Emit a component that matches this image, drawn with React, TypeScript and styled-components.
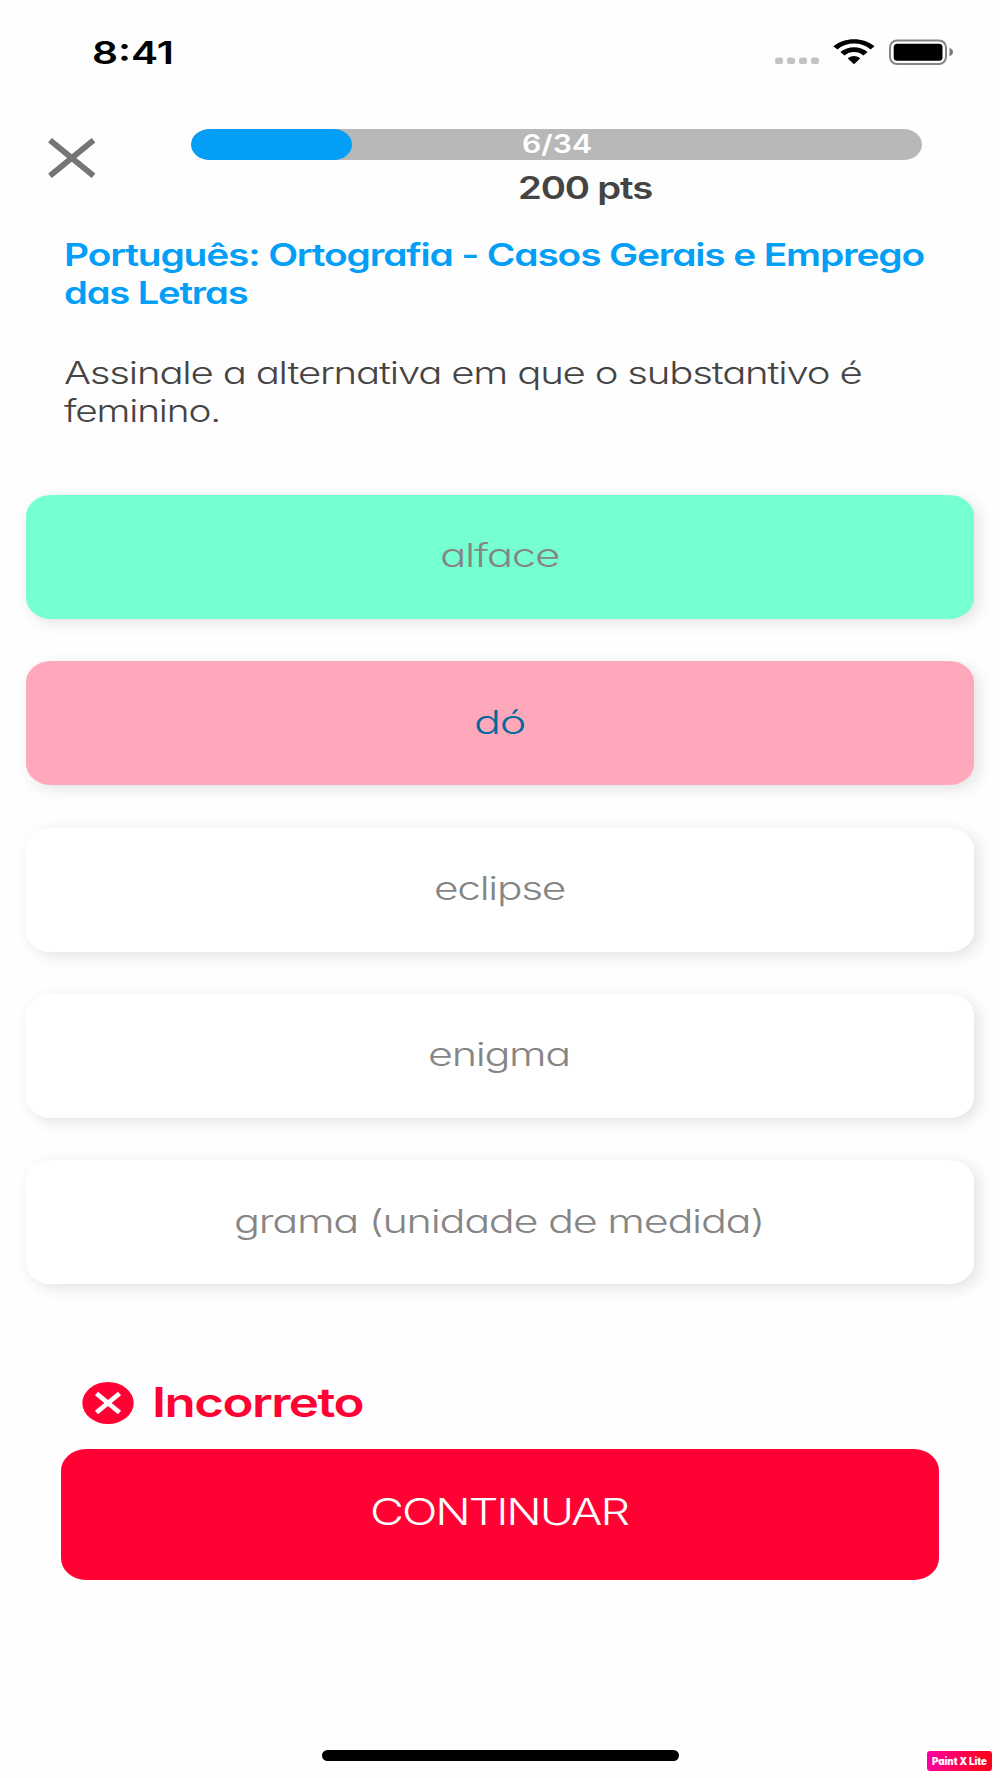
import React, { useLayoutEffect, useRef, useState } from "react";
import styled, { createGlobalStyle } from "styled-components";

const GlobalStyle = createGlobalStyle`
  *, *::before, *::after { box-sizing: border-box; }
  html, body { margin: 0; padding: 0; background: #fefefe; }
  body {
    font-family: Inter, "Open Sans", "Liberation Sans", sans-serif;
    font-feature-settings: "cv11" 1;
  }
`;

const WideBox = styled.span<{ $width: number }>`
  display: block;
  flex: none;
  width: ${(p) => p.$width}px;
  text-align: left;
`;

const WideInner = styled.span<{ $tracking: number }>`
  display: inline-block;
  white-space: nowrap;
  letter-spacing: ${(p) => p.$tracking}em;
  transform-origin: 0 50%;
`;

type WideTextProps = { width: number; tracking?: number; children: string };

/** One line of extended type, set to an exact measure. */
function WideText({ width, tracking = -0.03, children }: WideTextProps) {
  const ref = useRef<HTMLSpanElement>(null);
  const [scale, setScale] = useState(1.2);
  useLayoutEffect(() => {
    if (ref.current) setScale((width / ref.current.getBoundingClientRect().width) * scale);
  }, [width, children]);
  return (
    <WideBox $width={width}>
      <WideInner ref={ref} $tracking={tracking} style={{ transform: `scaleX(${scale})` }}>
        {children}
      </WideInner>
    </WideBox>
  );
}

const Screen = styled.main`
  display: flex;
  flex-direction: column;
  width: 1000px;
  height: 1778px;
  background: #fefefe;
  overflow: hidden;
  position: relative;
`;

const StatusBar = styled.div`
  display: flex;
  align-items: center;
  justify-content: space-between;
  height: 104px;
  padding: 0 47px 0 92px;
`;

const Clock = styled.div`
  padding-top: 2px;
  font-size: 31.5px;
  line-height: 40px;
  font-weight: 600;
  color: #000;
`;

const StatusIcons = styled.svg`
  display: block;
  width: 178px;
  height: 26px;
`;

const Header = styled.header`
  display: flex;
  align-items: flex-start;
  height: 132px;
  padding: 24.500px 78px 0 48px;
`;

const CloseButton = styled.button`
  width: 48px;
  height: 40px;
  margin: 9px 95px 0 0;
  padding: 0;
  border: 0;
  background: none;

  svg { display: block; }
`;

const Progress = styled.div`
  display: flex;
  flex-direction: column;
  align-items: center;
  flex: 1;
`;

const Track = styled.div`
  position: relative;
  display: flex;
  justify-content: center;
  width: 731px;
  height: 31.5px;
  border-radius: 19px / 16px;
  background: #b8b8b8;
  overflow: hidden;
`;

const Fill = styled.div`
  position: absolute;
  inset: 0 auto 0 0;
  border-radius: 19px / 16px;
  background: #039ef6;
`;

const Count = styled.div`
  position: relative;
  font-size: 25px;
  line-height: 30px;
  font-weight: 600;
  color: #fff;
`;

const Points = styled.div`
  margin: 10px 0 0 57px;
  font-size: 31px;
  line-height: 36px;
  font-weight: 600;
  color: #444;
`;

const Question = styled.section`
  padding: 0 64px;
`;

const Subject = styled.h1`
  margin: 0;
  font-size: 31.5px;
  line-height: 38.3px;
  font-weight: 600;
  color: #039ef6;
`;

const Prompt = styled.p`
  margin: 41px 0 0;
  font-size: 31px;
  line-height: 38px;
  font-weight: 300;
  color: #444;
`;

const Options = styled.div`
  display: flex;
  flex-direction: column;
  gap: 42.3px;
  margin-top: 65.400px;
  padding: 0 25.7px;
`;

type Tone = "plain" | "right" | "wrong";
const fills: Record<Tone, string> = { plain: "#fff", right: "#76ffd1", wrong: "#ffa8bc" };

const Option = styled.button<{ $tone: Tone }>`
  display: flex;
  align-items: center;
  justify-content: center;
  height: 124px;
  padding: 0 2px 1px 0;
  border: 0;
  border-radius: 25px / 21px;
  background: ${(p) => fills[p.$tone]};
  box-shadow: 5px 4px 15px rgba(0, 0, 0, 0.11);
  font: inherit;
  font-size: 32px;
  line-height: 40px;
  font-weight: 300;
  color: ${(p) => (p.$tone === "wrong" ? "#056a9c" : "#858585")};
`;

const Feedback = styled.footer`
  padding: 97px 61px 0;
`;

const Verdict = styled.div`
  display: flex;
  align-items: center;
  gap: 18px;
  height: 44px;
  padding-left: 21px;
  font-size: 40.5px;
  line-height: 44px;
  font-weight: 600;
  color: #ff0233;
`;

const Continue = styled.button`
  display: flex;
  align-items: center;
  justify-content: center;
  width: 878px;
  height: 131px;
  margin-top: 24px;
  padding: 0 2px 5px 0;
  border: 0;
  border-radius: 25px / 22px;
  background: #ff0233;
  font: inherit;
  font-size: 37px;
  line-height: 44px;
  font-weight: 300;
  color: #fff;
`;

const HomeIndicator = styled.div`
  width: 357px;
  height: 11px;
  margin: auto 0 17px 322px;
  border-radius: 6px;
  background: #000;
`;

const Watermark = styled.div`
  position: absolute;
  right: 8px;
  bottom: 7px;
  display: flex;
  align-items: center;
  justify-content: center;
  width: 65px;
  height: 20px;
  border-radius: 3px;
  background: linear-gradient(100deg, #ff00a5, #ff0022 85%);
  font-size: 10px;
  line-height: 19px;
  font-weight: 900;
  color: #fff;
`;

const options: { label: string; width: number; tone: Tone }[] = [
  { label: "alface", width: 119, tone: "right" },
  { label: "dó", width: 51, tone: "wrong" },
  { label: "eclipse", width: 131, tone: "plain" },
  { label: "enigma", width: 142, tone: "plain" },
  { label: "grama (unidade de medida)", width: 530, tone: "plain" },
];

const answered = 6;
const total = 34;

export default function App() {
  return (
    <>
      <GlobalStyle />
      <Screen>
        <StatusBar>
          <Clock><WideText width={82} tracking={0}>8:41</WideText></Clock>
          <StatusIcons viewBox="0 0 178 26">
            {[0, 12, 24, 36].map((x) => (
              <rect key={x} x={x} y="18.5" width="8" height="6.5" rx="2.6" fill="#c3c3c3" />
            ))}
            <g transform="translate(58 0)" fill="#000">
              <path d="M.4 7.2C11.5-2.2 30.5-2.2 41.6 7.2L37.6 10.5C28.4 2.6 13.6 2.6 4.400 10.500Z" />
              <path d="M7.4 13C15 6.600 27 6.600 34.6 13L30.5 16.5C25 11.9 17 11.9 11.5 16.5Z" />
              <path d="M14.700 19.3Q21 14.7 27.3 19.3L21.9 24.6Q21 25.3 20.1 24.6Z" />
            </g>
            <rect x="115" y="1.5" width="56" height="23.5" rx="7" fill="none" stroke="#858585" strokeWidth="2" />
            <rect x="118.7" y="4.8" width="48.8" height="17" rx="3.5" fill="#000" />
            <path d="M174.5 9Q178 10 178 13T174.5 17Z" fill="#777" />
          </StatusIcons>
        </StatusBar>

        <Header>
          <CloseButton aria-label="Fechar">
            <svg width="48" height="40" viewBox="0 0 48 40">
              <path d="M2 2.200L45.500 37.800M45.500 2.200L2 37.800" stroke="#757575" strokeWidth="5.8" fill="none" />
            </svg>
          </CloseButton>
          <Progress>
            <Track>
              <Fill style={{ width: `${((answered + 1.5) / total) * 100}%` }} />
              <Count><WideText width={70} tracking={0}>{`${answered}/${total}`}</WideText></Count>
            </Track>
            <Points><WideText width={134}>200 pts</WideText></Points>
          </Progress>
        </Header>

        <Question>
          <Subject>
            <WideText width={860}>Português: Ortografia - Casos Gerais e Emprego</WideText>
            <WideText width={183.5}>das Letras</WideText>
          </Subject>
          <Prompt>
            <WideText width={797.5}>Assinale a alternativa em que o substantivo é</WideText>
            <WideText width={156}>feminino.</WideText>
          </Prompt>
        </Question>

        <Options>
          {options.map((o) => (
            <Option key={o.label} $tone={o.tone}>
              <WideText width={o.width}>{o.label}</WideText>
            </Option>
          ))}
        </Options>

        <Feedback>
          <Verdict>
            <svg width="52" height="42" viewBox="0 0 52 42">
              <ellipse cx="26" cy="21" rx="25.7" ry="21" fill="#ff0233" />
              <path d="M14.5 11.5L37.5 30.5M37.5 11.5L14.5 30.5" stroke="#fff" strokeWidth="4.8" />
            </svg>
            <WideText width={211}>Incorreto</WideText>
          </Verdict>
          <Continue><WideText width={258} tracking={-0.045}>CONTINUAR</WideText></Continue>
        </Feedback>

        <HomeIndicator />
        <Watermark><WideText width={55} tracking={0}>Paint X Lite</WideText></Watermark>
      </Screen>
    </>
  );
}
